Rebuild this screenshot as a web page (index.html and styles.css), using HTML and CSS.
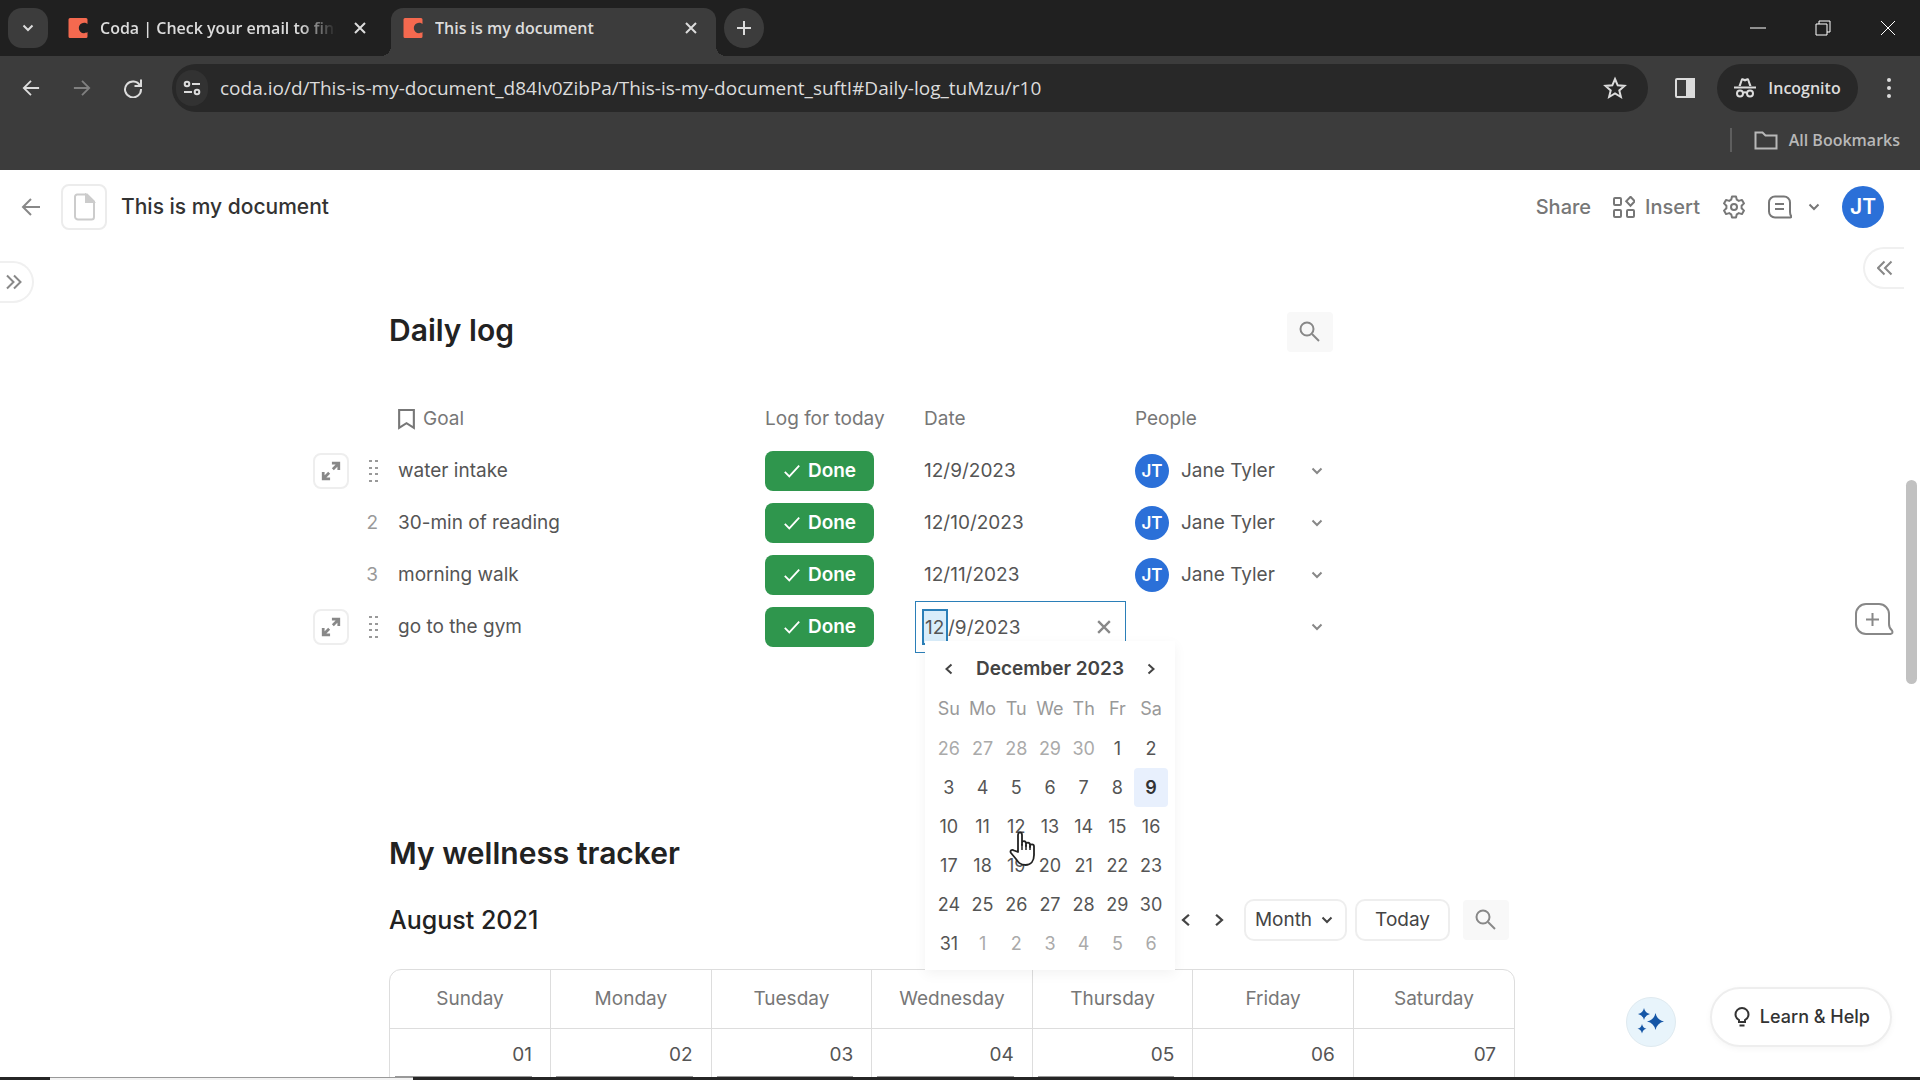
FILE: index.html
```html
<!DOCTYPE html>
<html lang="en">
<head>
<meta charset="utf-8">
<title>This is my document</title>
<link rel="stylesheet" href="styles.css">
</head>
<body>
<svg class="defs" aria-hidden="true">
  <symbol id="coda" viewBox="0 0 20 20"><path fill="#f4694f" d="M2 0h16a1.500 1.500 0 0 1 1.500 1.500V6c-1-.8-2-1.200-3.500-1.200a5.200 5.200 0 0 0 0 10.400c1.500 0 2.500-.4 3.500-1.200v4.500A1.500 1.500 0 0 1 18 20H2a1.500 1.500 0 0 1-1.500-1.500v-17A1.500 1.500 0 0 1 2 0z"/></symbol>
  <symbol id="x" viewBox="0 0 12 12"><path d="M1 1l10 10M11 1L1 11"/></symbol>
  <symbol id="down" viewBox="0 0 12 12"><path d="M1.500 3.500L6 8l4.500-4.500"/></symbol>
  <symbol id="left" viewBox="0 0 12 12"><path d="M8.500 1.500L3.500 6l5 4.500"/></symbol>
  <symbol id="right" viewBox="0 0 12 12"><path d="M3.500 1.500L8.500 6l-5 4.500"/></symbol>
  <symbol id="arrow" viewBox="0 0 20 20"><path d="M19 10H2M10 2l-8 8 8 8"/></symbol>
  <symbol id="search" viewBox="0 0 24 24"><circle cx="9" cy="9" r="6.500"/><path d="M14 14l7 7"/></symbol>
  <symbol id="check" viewBox="0 0 20 20"><path d="M2 11l5 5L18 4"/></symbol>
  <symbol id="expand" viewBox="0 0 24 24"><path stroke-width="3" d="M14 10l6-6M13 3.500h7.500V11M10 14l-6 6M3.500 13v7.500H11"/></symbol>
  <symbol id="grip" viewBox="0 0 10 24"><g fill="currentColor" stroke="none"><path d="M1 1h3v2H1zM7 1h3v2H7zM1 8h3v2H1zM7 8h3v2H7zM1 14h3v2H1zM7 14h3v2H7zM1 21h3v2H1zM7 21h3v2H7z"/></g></symbol>
</svg>

<header class="browser">
  <div class="tabstrip">
    <button class="tab-list" aria-label="Search tabs"><svg class="i12"><use href="#down"/></svg></button>
    <div class="tab">
      <svg class="i20"><use href="#coda"/></svg>
      <span class="tab-title fade">Coda | Check your email to fini</span>
      <button class="bare" aria-label="Close tab"><svg class="i12"><use href="#x"/></svg></button>
    </div>
    <div class="tab active">
      <svg class="i20"><use href="#coda"/></svg>
      <span class="tab-title">This is my document</span>
      <button class="bare" aria-label="Close tab"><svg class="i12"><use href="#x"/></svg></button>
    </div>
    <button class="new-tab" aria-label="New tab"><svg class="i16" viewBox="0 0 16 16"><path d="M8 1v14M1 8h14"/></svg></button>
    <div class="window-controls">
      <button class="bare" aria-label="Minimize"><svg class="i16" viewBox="0 0 16 16"><path d="M0 8h16"/></svg></button>
      <button class="bare" aria-label="Restore"><svg class="i16" viewBox="0 0 16 16"><path d="M1 4h11v11H1zM4 4V1h11v11h-3"/></svg></button>
      <button class="bare" aria-label="Close"><svg class="i16" viewBox="0 0 16 16"><path d="M1 1l14 14M15 1L1 15"/></svg></button>
    </div>
  </div>
  <div class="toolbar">
    <button class="bare nav" aria-label="Back"><svg class="i18"><use href="#arrow"/></svg></button>
    <button class="bare nav off" aria-label="Forward"><svg class="i18 flip"><use href="#arrow"/></svg></button>
    <button class="bare nav" aria-label="Reload"><svg class="i20" viewBox="0 0 20 20"><path d="M17 7.500A8 8 0 1 0 18 11M18 1.500v6.500h-6.500"/></svg></button>
    <div class="omnibox">
      <span class="site"><svg class="i18" viewBox="0 0 18 18"><circle cx="4" cy="5" r="2.300"/><path d="M9 5h8M1 13h8"/><circle cx="14" cy="13" r="2.300"/></svg></span>
      <input class="url" aria-label="Address" value="coda.io/d/This-is-my-document_d84Iv0ZibPa/This-is-my-document_suftI#Daily-log_tuMzu/r10">
      <button class="bare" aria-label="Bookmark"><svg class="i24" viewBox="0 0 24 24"><path d="M12 3l2.700 6.300 6.800.6-5.200 4.500 1.600 6.600-5.900-3.500-5.900 3.500 1.600-6.600L2.500 9.900l6.800-.6z"/></svg></button>
    </div>
    <button class="bare panel" aria-label="Side panel"><svg class="i20" viewBox="0 0 20 20"><rect x="1" y="1" width="18" height="18" rx="1"/><path fill="currentColor" d="M12 1h7v18h-7z"/></svg></button>
    <button class="incognito"><svg class="i22" viewBox="0 0 22 22"><path d="M0 10.500h22"/><path fill="currentColor" stroke="none" d="M4.500 9L7 2.200c.3-1 1-1.200 1.800-1L11 2l2.200-.8c.8-.2 1.500 0 1.800 1L17.500 9h-2.300l-1.800-5.400-2.400.8-2.400-.8L6.800 9z"/><circle cx="6" cy="16.500" r="3"/><circle cx="16" cy="16.500" r="3"/><path d="M9 16q2-1.500 4 0"/></svg>Incognito</button>
    <button class="bare menu" aria-label="Menu"><svg class="i20" viewBox="0 0 20 20"><g fill="currentColor" stroke="none"><circle cx="10" cy="2" r="2"/><circle cx="10" cy="10" r="2"/><circle cx="10" cy="18" r="2"/></g></svg></button>
  </div>
  <div class="bookmarks">
    <a class="all-bookmarks" href="#"><svg class="i24" viewBox="0 0 24 24"><path d="M1.500 4.500h7l3 3h11v13h-21z"/></svg>All Bookmarks</a>
  </div>
</header>

<div class="app">
  <header class="doc-header">
    <button class="bare back" aria-label="Back to documents"><svg class="i20"><use href="#arrow"/></svg></button>
    <button class="doc-icon" aria-label="Document icon"><svg class="i28" viewBox="0 0 28 28"><path d="M7 1.500h10l7 7V24a2.500 2.500 0 0 1-2.500 2.500h-13A3 3 0 0 1 5 23.500V4a2.500 2.500 0 0 1 2-2.500z"/><path fill="currentColor" d="M16 2v7h7.500z"/></svg></button>
    <h1 class="doc-title">This is my document</h1>
    <nav class="doc-actions">
      <button class="bare text">Share</button>
      <button class="bare text insert"><svg class="i22" viewBox="0 0 22 22"><rect x="1" y="2" width="7" height="7" rx="1"/><rect x="1" y="14" width="7" height="7" rx="1"/><rect x="14" y="14" width="7" height="7" rx="1"/><path d="M17.500.8l4.300 4.500-4.300 4.500-4.300-4.500z"/></svg>Insert</button>
      <button class="bare" aria-label="Settings"><svg class="i24" viewBox="0 0 24 24"><path d="M10 1.500h4l.8 3.200 2 1.200 3.200-1 2 3.500-2.400 2.300v2.600l2.400 2.300-2 3.500-3.200-1-2 1.200-.8 3.200h-4l-.8-3.200-2-1.200-3.200 1-2-3.500 2.400-2.300v-2.600L2 8.400l2-3.500 3.200 1 2-1.200z" stroke-linejoin="round"/><circle cx="12" cy="12" r="3"/></svg></button>
      <div class="comments">
        <button class="bare" aria-label="Comments"><svg class="i24" viewBox="0 0 24 24"><path d="M7 1.500h9a6 6 0 0 1 6 6v9.500q0 2.500 1.200 4.200.5 1.300-1 1.300H7a6 6 0 0 1-6-6v-9a6 6 0 0 1 6-6zM7 9h9M7 14h9"/></svg></button>
        <button class="bare" aria-label="More"><svg class="i12"><use href="#down"/></svg></button>
      </div>
      <button class="avatar big">JT</button>
    </nav>
  </header>

  <button class="side-tab left-tab" aria-label="Show pages"><svg class="i16" viewBox="0 0 16 16"><path d="M1 1.500L7.500 8 1 14.500M8 1.500L14.500 8 8 14.500"/></svg></button>
  <button class="side-tab right-tab" aria-label="Show panel"><svg class="i16" viewBox="0 0 16 16"><path d="M7.500 1.500L1 8l6.500 6.500M14.500 1.500L8 8l6.500 6.500"/></svg></button>

  <main class="canvas">
    <section class="daily">
      <div class="daily-head">
        <h2>Daily log</h2>
        <button class="search" aria-label="Search table"><svg class="i24"><use href="#search"/></svg></button>
      </div>
      <table class="log">
        <colgroup><col class="c-gutter"><col class="c-goal"><col class="c-log"><col class="c-date"><col class="c-people"></colgroup>
        <thead>
          <tr><th></th><th><span class="goal-head"><svg class="bookmark" viewBox="0 0 16 20"><path d="M1 1h14v17l-7-4.500L1 18z"/></svg>Goal</span></th><th>Log for today</th><th>Date</th><th>People</th></tr>
        </thead>
        <tbody>
          <tr>
            <td class="gutter"><div class="handle"><button class="expand" aria-label="Open row"><svg class="i22"><use href="#expand"/></svg></button><svg class="grip"><use href="#grip"/></svg></div></td>
            <td>water intake</td>
            <td><button class="done"><svg class="i18"><use href="#check"/></svg>Done</button></td>
            <td>12/9/2023</td>
            <td><div class="person"><span class="avatar">JT</span>Jane Tyler<button class="bare pick" aria-label="Pick person"><svg class="i12"><use href="#down"/></svg></button></div></td>
          </tr>
          <tr>
            <td class="gutter">2</td>
            <td>30-min of reading</td>
            <td><button class="done"><svg class="i18"><use href="#check"/></svg>Done</button></td>
            <td>12/10/2023</td>
            <td><div class="person"><span class="avatar">JT</span>Jane Tyler<button class="bare pick" aria-label="Pick person"><svg class="i12"><use href="#down"/></svg></button></div></td>
          </tr>
          <tr>
            <td class="gutter">3</td>
            <td>morning walk</td>
            <td><button class="done"><svg class="i18"><use href="#check"/></svg>Done</button></td>
            <td>12/11/2023</td>
            <td><div class="person"><span class="avatar">JT</span>Jane Tyler<button class="bare pick" aria-label="Pick person"><svg class="i12"><use href="#down"/></svg></button></div></td>
          </tr>
          <tr>
            <td class="gutter"><div class="handle"><button class="expand" aria-label="Open row"><svg class="i22"><use href="#expand"/></svg></button><svg class="grip"><use href="#grip"/></svg></div></td>
            <td>go to the gym</td>
            <td><button class="done"><svg class="i18"><use href="#check"/></svg>Done</button></td>
            <td class="editing">
              <div class="date-field">
                <input class="month" aria-label="Month" value="12">
                <input class="rest" aria-label="Day and year" value="/9/2023">
                <button class="bare" aria-label="Clear date"><svg class="i14"><use href="#x"/></svg></button>
              </div>
              <div class="picker">
                <div class="picker-head">
                  <button class="bare" aria-label="Previous month"><svg class="i12"><use href="#left"/></svg></button>
                  <strong>December 2023</strong>
                  <button class="bare" aria-label="Next month"><svg class="i12"><use href="#right"/></svg></button>
                </div>
                <table class="days">
                  <thead><tr><th>Su</th><th>Mo</th><th>Tu</th><th>We</th><th>Th</th><th>Fr</th><th>Sa</th></tr></thead>
                  <tbody>
                    <tr><td class="dim">26</td><td class="dim">27</td><td class="dim">28</td><td class="dim">29</td><td class="dim">30</td><td>1</td><td>2</td></tr>
                    <tr><td>3</td><td>4</td><td>5</td><td>6</td><td>7</td><td>8</td><td class="selected">9</td></tr>
                    <tr><td>10</td><td>11</td><td>12</td><td>13</td><td>14</td><td>15</td><td>16</td></tr>
                    <tr><td>17</td><td>18</td><td>19</td><td>20</td><td>21</td><td>22</td><td>23</td></tr>
                    <tr><td>24</td><td>25</td><td>26</td><td>27</td><td>28</td><td>29</td><td>30</td></tr>
                    <tr><td>31</td><td class="dim">1</td><td class="dim">2</td><td class="dim">3</td><td class="dim">4</td><td class="dim">5</td><td class="dim">6</td></tr>
                  </tbody>
                </table>
                <svg class="pointer" viewBox="0 0 28 36"><path fill="#fff" stroke="#222" stroke-width="1.800" stroke-linejoin="round" d="M9 21V4c0-3.500 4-3.500 4 0v10-2c0-2.500 4-2.500 4 .5V15v-1.500c0-2.500 4-2.500 4 .5v2-1c0-2.300 4-2.300 4 .5V24c0 6-3 10-8.500 10C11 34 9 31 7 28l-5-6c-1.500-2.500 1-4 3-2.500z"/><path stroke="#222" stroke-width="1.500" d="M13 13v6M17 14v5M21 15v4"/></svg>
              </div>
            </td>
            <td><div class="person"><button class="bare pick" aria-label="Pick person"><svg class="i12"><use href="#down"/></svg></button></div></td>
          </tr>
        </tbody>
      </table>
    </section>

    <section class="wellness">
      <h2>My wellness tracker</h2>
      <div class="calendar-bar">
        <h3>August 2021</h3>
        <button class="bare step" aria-label="Previous"><svg class="i14"><use href="#left"/></svg></button>
        <button class="bare step" aria-label="Next"><svg class="i14"><use href="#right"/></svg></button>
        <button class="outlined month-view">Month<svg class="i12"><use href="#down"/></svg></button>
        <button class="outlined">Today</button>
        <button class="search" aria-label="Search calendar"><svg class="i24"><use href="#search"/></svg></button>
      </div>
      <div class="calendar-frame">
        <table class="calendar">
          <thead><tr><th>Sunday</th><th>Monday</th><th>Tuesday</th><th>Wednesday</th><th>Thursday</th><th>Friday</th><th>Saturday</th></tr></thead>
          <tbody><tr><td>01<i></i></td><td>02<i></i></td><td>03<i></i></td><td>04<i></i></td><td>05<i></i></td><td>06</td><td>07</td></tr></tbody>
        </table>
      </div>
    </section>
  </main>

  <div class="scroll-thumb"></div>
  <button class="bare add-comment" aria-label="Add comment"><svg viewBox="0 0 40 34"><path fill="#fff" d="M12 2h13a10 10 0 0 1 10 10v10q0 4 3 6.500 1.500 3-1.500 3.500H12A10 10 0 0 1 2 22V12A10 10 0 0 1 12 2z"/><path d="M18.500 11v13M12 17.500h13"/></svg></button>
  <div class="floaters">
    <button class="ai" aria-label="AI assistant"><svg viewBox="0 0 28 28"><path fill="#1556a6" d="M18.500 5q1.500 7 8.500 8.500-7 1.500-8.500 8.500-1.500-7-8.500-8.500 7-1.500 8.500-8.500zM7 0q1 5 6 6-5 1-6 6-1-5-6-6 5-1 6-6zM5 16q.8 4 4.500 4.700Q5.800 21.500 5 25.500 4.200 21.500.5 20.700 4.200 20 5 16z"/></svg></button>
    <button class="help"><svg class="i20" viewBox="0 0 20 20"><path d="M7 15v-2C4.500 11.500 3.500 9.800 3.500 7.500a6.500 6.500 0 0 1 13 0c0 2.300-1 4-3.500 5.500v2zM7.500 18.500h5"/></svg>Learn &amp; Help</button>
  </div>
</div>
<div class="taskbar"><div class="taskbar-search"></div></div>
</body>
</html>
```
FILE: styles.css
```css
* { box-sizing: border-box; }
body {
  margin: 0;
  height: 100vh;
  display: flex;
  flex-direction: column;
  overflow: hidden;
  background: #fff;
  color: #555;
  font: 400 19px/24px Inter, "Liberation Sans", sans-serif;
}
button, input { font: inherit; color: inherit; }
button { display: flex; align-items: center; justify-content: center; padding: 0; border: 0; cursor: pointer; }
.bare { background: none; }
h1, h2, h3 { margin: 0; }
svg { fill: none; stroke: currentColor; stroke-width: 2; flex: none; display: block; }
.defs { position: absolute; width: 0; height: 0; }
.i12 { width: 12px; height: 12px; }
.i14 { width: 14px; height: 14px; }
.i16 { width: 16px; height: 16px; }
.i18 { width: 18px; height: 18px; }
.i20 { width: 20px; height: 20px; }
.i22 { width: 22px; height: 22px; }
.i24 { width: 24px; height: 24px; }
.i28 { width: 28px; height: 28px; }
.flip { transform: scaleX(-1); }

/* Browser window */
.browser { background: #3c3c3c; color: #dcdcdc; font: 400 19px/24px "Open Sans", "Noto Sans", sans-serif; flex: none; }
.tabstrip { display: flex; height: 56px; padding: 8px 0 0 8px; background: #202020; }
.tab-list { width: 40px; height: 40px; border-radius: 14px; background: #3c3c3c; margin-right: 12px; }
.tab { position: relative; display: flex; align-items: center; width: 325px; padding: 0 19px 8px 8px; margin-right: 6px; border-radius: 12px 12px 0 0; }
.tab .i20 { margin-right: 12px; stroke: none; }
.tab.active { padding-left: 12px; background: #3c3c3c; margin-right: 8px; }
.tab.active::before, .tab.active::after { content: ""; position: absolute; bottom: 0; width: 10px; height: 10px; }
.tab.active::before { left: -10px; background: radial-gradient(circle at 0 0, transparent 10px, #3c3c3c 10px); }
.tab.active::after { right: -10px; background: radial-gradient(circle at 100% 0, transparent 10px, #3c3c3c 10px); }
.tab-title { flex: 1; min-width: 0; overflow: hidden; white-space: nowrap; font-size: 16px; font-weight: 600; margin-right: 18px; }
.fade { mask-image: linear-gradient(to right, #000 85%, transparent); }
.new-tab { width: 40px; height: 40px; border-radius: 50%; background: #3c3c3c; }
.window-controls { display: flex; align-items: flex-start; margin-left: auto; }
.window-controls button { width: 65px; height: 40px; }
.window-controls svg { stroke-width: 1; stroke: #fff; }
.toolbar { display: flex; align-items: center; padding: 8px 11px 8px 5px; }
.nav { width: 51px; height: 40px; }
.off { color: #808080; }
.omnibox { flex: 1; display: flex; align-items: center; height: 48px; margin-left: 14px; padding: 0 21px 0 4px; border-radius: 24px; background: #282828; }
.site { display: grid; place-items: center; width: 32px; height: 36px; border-radius: 16px; background: #323232; }
.url { flex: 1; min-width: 0; margin-left: 12px; padding: 0; border: 0; outline: 0; background: none; }
.panel { width: 50px; height: 40px; margin-left: 12px; }
.incognito { width: 141px; height: 48px; margin-left: 7px; border-radius: 24px; gap: 12px; background: #282828; font-size: 16px; font-weight: 600; }
.menu { width: 40px; height: 40px; margin-left: 11px; }
.bookmarks { display: flex; justify-content: flex-end; padding: 8px 20px 18px; }
.all-bookmarks { display: flex; align-items: center; gap: 11px; padding-left: 22px; border-left: 2px solid #5e5e5e; color: #b8b8b8; font-size: 16px; font-weight: 600; text-decoration: none; }

/* Document chrome */
.app { position: relative; flex: 1; min-height: 0; overflow: hidden; }
.doc-header { display: flex; align-items: center; height: 74px; padding: 0 36px 0 21px; color: #777; }
.doc-icon { width: 46px; height: 46px; margin: 0 14px 0 20px; border: 2px solid #ececec; border-radius: 8px; background: #fff; color: #ccc; }
.back { color: #888; }
.doc-title { font-size: 21px; font-weight: 500; line-height: 28px; color: #333; }
.doc-actions { display: flex; align-items: center; gap: 22px; margin-left: auto; }
.comments { display: flex; align-items: center; gap: 16px; }
.text { font-size: 20px; font-weight: 500; }
.insert { gap: 10px; }
.avatar { display: grid; place-items: center; width: 34px; height: 34px; border-radius: 50%; background: #2b70d8; color: #fff; font-size: 17px; font-weight: 600; }
.avatar.big { width: 42px; height: 42px; font-size: 21px; }
.side-tab { position: absolute; width: 34px; height: 42px; background: #fff; border: 2px solid #f0f0f0; color: #888; }
.left-tab { left: 0; top: 91px; border-left: 0; border-radius: 0 21px 21px 0; padding-right: 4px; }
.right-tab { right: 16px; top: 77px; width: 41px; border-right: 0; border-radius: 21px 0 0 21px; }
.scroll-thumb { position: absolute; right: 3px; top: 310px; width: 11px; height: 204px; border-radius: 6px; background: #c1c1c1; }
.add-comment { position: absolute; right: 26px; top: 432px; color: #888; }
.add-comment svg { width: 40px; height: 34px; }
.floaters { position: absolute; right: 28px; bottom: 30px; display: flex; align-items: flex-end; gap: 34px; }
.ai { width: 50px; height: 50px; border-radius: 50%; border: 1px solid #dfeaf0; background: #e8f4fb; }
.ai svg { width: 28px; height: 28px; stroke: none; }
.help { height: 60px; padding: 0 20px; gap: 8px; border: 2px solid #eee; border-radius: 30px; background: #fff; color: #333; font-size: 18px; font-weight: 500; box-shadow: 0 2px 6px rgba(0, 0, 0, .04); }
.taskbar { flex: none; height: 3px; padding-left: 50px; background: #262626; }
.taskbar-search { width: 363px; height: 3px; border-top: 1px solid #999; background: #f2f2f2; }

/* Page content */
.canvas { width: 100%; max-width: 1142px; margin: 0 auto; padding: 68px 16px 0 0; }
h2 { font-size: 30px; font-weight: 600; line-height: 40px; color: #222; }
.daily { max-width: 946px; }
.daily-head { display: flex; justify-content: space-between; align-items: flex-start; height: 42px; margin-bottom: 39px; padding-right: 2px; }
.daily-head h2 { line-height: 36px; }
.search { width: 46px; height: 40px; border-radius: 4px; background: #f8f8f8; color: #888; }
.log { width: 1026px; margin-left: -80px; table-layout: fixed; border-collapse: collapse; }
.c-gutter { width: 80px; }
.c-goal { width: 367px; }
.c-log { width: 159px; }
.c-date { width: 211px; }
.c-people { width: 209px; }
.log th, .log > tbody > tr > td { height: 52px; padding: 0 0 0 9px; text-align: left; font-weight: 400; }
.log th { color: #777; }
.goal-head { display: flex; align-items: center; gap: 8px; }
.bookmark { width: 17px; height: 21px; }
.log > tbody > tr > .gutter { padding: 0 11px 0 4px; text-align: right; color: #999; }
.handle { display: flex; align-items: center; justify-content: space-between; }
.expand { width: 36px; height: 36px; border: 2px solid #eee; border-radius: 8px; background: #fff; color: #888; }
.grip { width: 10px; height: 24px; }
.done { width: 109px; height: 40px; gap: 7px; border-radius: 8px; background: #2f964d; color: #fff; font-weight: 600; }
.person { display: flex; align-items: center; gap: 12px; }
.pick { margin-left: auto; margin-right: 12px; color: #888; }
.log > tbody > tr > .editing { position: relative; padding: 0; }
.date-field { display: flex; align-items: center; height: 52px; padding: 0 14px 0 6px; border: 1px solid #2b7fb8; }
.date-field input { padding: 0; border: 0; outline: 0; min-width: 0; height: 36px; }
.date-field .month { width: 26px; padding-left: 1px; border: 2px solid #2b7fb8; background: #d9edfa; }
.date-field .rest { flex: 1; background: none; }
.date-field button { color: #888; }
.picker { position: absolute; z-index: 2; left: 10px; top: 40px; width: 250px; padding: 8px 7px 7px; background: #fff; box-shadow: 0 4px 12px rgba(0, 0, 0, .05); }
.picker-head { display: flex; align-items: center; justify-content: space-between; height: 40px; padding: 0 11px; color: #444; }
.picker-head strong { font-weight: 600; }
.days { width: 100%; table-layout: fixed; border-collapse: collapse; }
.days th, .days td { height: 39px; padding: 0; text-align: center; font-weight: 400; font-size: 18px; }
.log .days th { height: 40px; padding: 0; text-align: center; color: #999; }
.days .dim { color: #aaa; }
.days .selected { background: #e8f0fd; border-radius: 4px; color: #333; font-weight: 600; }
.picker .pointer { position: absolute; left: 84px; top: 190px; width: 28px; height: 36px; }

.wellness { margin-top: 180px; }
.calendar-bar { display: flex; align-items: center; height: 42px; margin: 26px 6px 28px 0; color: #444; }
h3 { margin-right: auto; font-size: 25px; font-weight: 500; line-height: 32px; color: #222; }
.step { width: 33px; height: 40px; }
.outlined { height: 42px; padding: 0 18px; margin-right: 8px; border: 2px solid #eee; border-radius: 10px; background: #fff; }
.month-view { margin-left: 8px; padding: 0 12px 0 9px; gap: 9px; }
.calendar-bar .search { margin-left: 5px; }
.calendar-frame { border: 1px solid #ddd; border-radius: 12px; overflow: hidden; }
.calendar { width: 100%; table-layout: fixed; border-collapse: collapse; }
.calendar th { height: 58px; padding: 0; font-weight: 400; color: #777; }
.calendar td { position: relative; height: 110px; padding: 14px 18px 0 0; text-align: right; vertical-align: top; border-top: 1px solid #ddd; }
.calendar th + th, .calendar td + td { border-left: 1px solid #ddd; }
.calendar i { display: block; height: 2px; margin: 9px 0 0 5px; background: #999; }
```
